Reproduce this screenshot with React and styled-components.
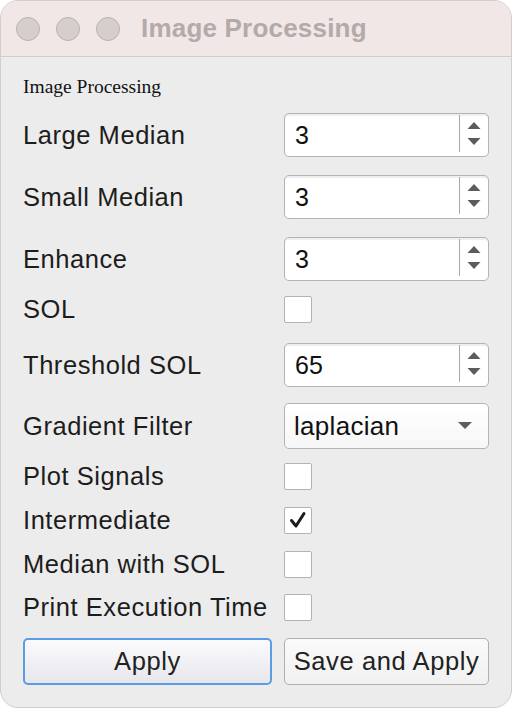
import React, { useState } from "react";
import styled, { createGlobalStyle } from "styled-components";

const GlobalStyle = createGlobalStyle`
  html, body {
    margin: 0;
    padding: 0;
    background: #ffffff;
  }
  * { box-sizing: border-box; }
`;

const rows = [
  { label: "Large Median", kind: "spin", value: "3", h: 62 },
  { label: "Small Median", kind: "spin", value: "3", h: 62 },
  { label: "Enhance", kind: "spin", value: "3", h: 62 },
  { label: "SOL", kind: "check", value: false, h: 39 },
  { label: "Threshold SOL", kind: "spin", value: "65", h: 72 },
  { label: "Gradient Filter", kind: "combo", value: "laplacian", h: 50 },
  { label: "Plot Signals", kind: "check", value: false, h: 50 },
  { label: "Intermediate", kind: "check", value: true, h: 38 },
  { label: "Median with SOL", kind: "check", value: false, h: 50 },
  { label: "Print Execution Time", kind: "check", value: false, h: 37 },
];

const SpinBox = ({ value }) => (
  <StyledSpin>
    <StyledSpinText>{value}</StyledSpinText>
    <StyledSpinArrows>
      <svg width="14" height="30" viewBox="0 0 14 30">
        <path d="M0.5 10 L7 3 L13.5 10 Z" fill="#5c5c5c" />
        <path d="M0.5 19 L7 26 L13.5 19 Z" fill="#5c5c5c" />
      </svg>
    </StyledSpinArrows>
  </StyledSpin>
);

const CheckBox = ({ initial }) => {
  const [checked, setChecked] = useState(initial);
  return (
    <StyledCheck onClick={() => setChecked(!checked)}>
      {checked && (
        <svg width="20" height="20" viewBox="0 0 20 20">
          <path d="M3.5 10.5 L8 16 L16 3.5" fill="none" stroke="#1c1c1c" strokeWidth="3" strokeLinecap="round" strokeLinejoin="round" />
        </svg>
      )}
    </StyledCheck>
  );
};

const Combo = ({ value }) => (
  <StyledCombo>
    <span>{value}</span>
    <svg width="14" height="8" viewBox="0 0 14 8">
      <path d="M0 0 L14 0 L7 7 Z" fill="#5c5c5c" />
    </svg>
  </StyledCombo>
);

const App = () => {
  return (
    <>
      <GlobalStyle />
      <StyledWindow>
        <StyledTitleBar>
          <StyledLights>
            <StyledLight />
            <StyledLight />
            <StyledLight />
          </StyledLights>
          <StyledTitle>Image Processing</StyledTitle>
        </StyledTitleBar>

        <StyledContent>
          <StyledGroupTitle>Image Processing</StyledGroupTitle>

          {rows.map((r) => (
            <StyledRow key={r.label} h={r.h}>
              <StyledLabel>{r.label}</StyledLabel>
              <StyledField>
                {r.kind === "spin" && <SpinBox value={r.value} />}
                {r.kind === "check" && <CheckBox initial={r.value} />}
                {r.kind === "combo" && <Combo value={r.value} />}
              </StyledField>
            </StyledRow>
          ))}

          <StyledButtons>
            <StyledButton primary>Apply</StyledButton>
            <StyledButton>Save and Apply</StyledButton>
          </StyledButtons>
        </StyledContent>
      </StyledWindow>
    </>
  );
};
export default App;

const StyledWindow = styled.div`
  width: 512px;
  height: 708px;
  background: #ececec;
  border: 1px solid #cfcfcf;
  border-radius: 18px;
  overflow: hidden;
  font-family: "Liberation Sans", Arial, sans-serif;
  color: #1d1d1d;
`;

const StyledTitleBar = styled.div`
  height: 56px;
  background: #f1e7e6;
  border-bottom: 1px solid #d3cbcb;
  display: flex;
  align-items: center;
  padding-left: 15px;
`;

const StyledLights = styled.div`
  display: flex;
  gap: 16px;
  margin-right: 21px;
`;

const StyledLight = styled.div`
  width: 24px;
  height: 24px;
  border-radius: 50%;
  background: #d6cdcd;
  border: 1px solid #bcb1b1;
`;

const StyledTitle = styled.div`
  font-size: 26px;
  font-weight: bold;
  color: #b3aaaa;
  letter-spacing: 0.2px;
  margin-top: -1px;
`;

const StyledContent = styled.div`
  padding: 0 22px;
`;

const StyledGroupTitle = styled.div`
  height: 47px;
  display: flex;
  align-items: center;
  padding-top: 13px;
  font-family: "Liberation Serif", "Times New Roman", serif;
  font-size: 19.5px;
  color: #111;
`;

const StyledRow = styled.div`
  height: ${(p) => p.h}px;
  display: grid;
  grid-template-columns: 1fr 205px;
  align-items: center;
`;

const StyledLabel = styled.div`
  font-size: 25.5px;
  letter-spacing: 0.55px;
  white-space: nowrap;
`;

const StyledField = styled.div`
  display: flex;
  align-items: center;
`;

const StyledSpin = styled.div`
  width: 205px;
  height: 44px;
  background: #ffffff;
  border: 1.5px solid #b3b3b3;
  border-radius: 5px;
  display: flex;
  align-items: stretch;
  box-shadow: inset 0 2px 0 #efefef;
`;

const StyledSpinText = styled.div`
  flex: 1;
  display: flex;
  align-items: center;
  padding-left: 10px;
  font-size: 25px;
  color: #111;
`;

const StyledSpinArrows = styled.div`
  width: 29px;
  display: flex;
  align-items: center;
  justify-content: center;
  border-left: 1.5px solid #a9a9a9;
  margin: 1px 0 4px 0;
`;

const StyledCheck = styled.div`
  width: 28px;
  height: 27px;
  background: #ffffff;
  border: 1.5px solid #b3b3b3;
  border-radius: 2px;
  display: flex;
  align-items: center;
  justify-content: center;
  cursor: pointer;
`;

const StyledCombo = styled.div`
  width: 205px;
  height: 46px;
  background: linear-gradient(#ffffff, #f7f7f7);
  border: 1.5px solid #b3b3b3;
  border-radius: 5px;
  display: flex;
  align-items: center;
  justify-content: space-between;
  padding: 0 16px 0 9px;
  font-size: 26px;
  letter-spacing: 0.3px;
  color: #111;
`;

const StyledButtons = styled.div`
  display: grid;
  grid-template-columns: 249px 205px;
  column-gap: 12px;
  padding-top: 12px;
`;

const StyledButton = styled.button`
  height: 47px;
  font-family: "Liberation Sans", Arial, sans-serif;
  font-size: 25.5px;
  letter-spacing: 0.6px;
  color: #222;
  border-radius: 5px;
  padding: 0;
  cursor: pointer;
  background: ${(p) => (p.primary ? "linear-gradient(#fbfbfd, #e6e7ec)" : "linear-gradient(#fafafa, #f1f1f1)")};
  border: ${(p) => (p.primary ? "2px solid #5c9ce4" : "1.5px solid #b0b0b0")};
`;
